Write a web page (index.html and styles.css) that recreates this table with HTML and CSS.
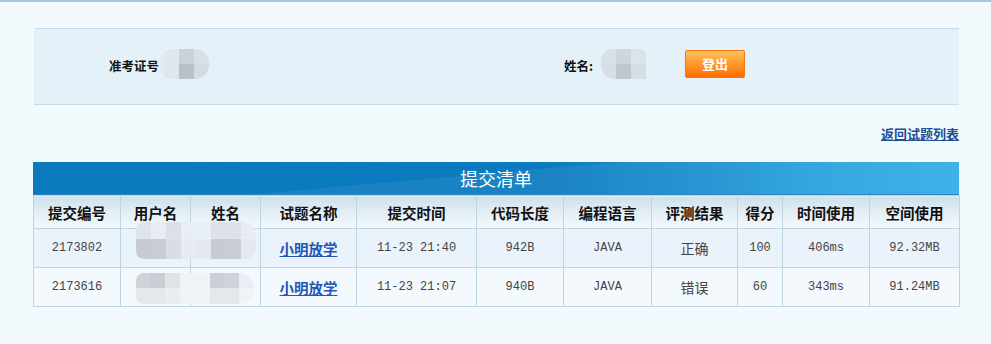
FILE: index.html
```html
<!DOCTYPE html>
<html lang="zh-CN">
<head>
<meta charset="utf-8">
<title>提交清单</title>
<link rel="stylesheet" href="styles.css">
</head>
<body>
<div class="page">
  <div class="user-panel">
    <div class="field field-id">
      <span class="label">准考证号</span>
      <span class="blur blur-id"></span>
    </div>
    <div class="field field-name">
      <span class="label">姓名:</span>
      <span class="blur blur-name"></span>
    </div>
    <button class="logout">登出</button>
  </div>

  <div class="back-row">
    <a class="back-link" href="#">返回试题列表</a>
  </div>

  <div class="list">
    <div class="list-title">提交清单</div>
    <div class="table-wrap">
      <table class="subs">
        <colgroup>
          <col class="c1"><col class="c2"><col class="c3"><col class="c4"><col class="c5"><col class="c6"><col class="c7"><col class="c8"><col class="c9"><col class="c10"><col class="c11">
        </colgroup>
        <thead>
          <tr>
            <th>提交编号</th><th>用户名</th><th>姓名</th><th>试题名称</th><th>提交时间</th><th>代码长度</th><th>编程语言</th><th>评测结果</th><th>得分</th><th>时间使用</th><th>空间使用</th>
          </tr>
        </thead>
        <tbody>
          <tr class="odd">
            <td class="mono">2173802</td><td></td><td></td><td><a class="prob" href="#">小明放学</a></td><td class="mono">11-23 21:40</td><td class="mono">942B</td><td class="mono">JAVA</td><td class="cjk">正确</td><td class="mono">100</td><td class="mono">406ms</td><td class="mono">92.32MB</td>
          </tr>
          <tr class="even">
            <td class="mono">2173616</td><td></td><td></td><td><a class="prob" href="#">小明放学</a></td><td class="mono">11-23 21:07</td><td class="mono">940B</td><td class="mono">JAVA</td><td class="cjk">错误</td><td class="mono">60</td><td class="mono">343ms</td><td class="mono">91.24MB</td>
          </tr>
        </tbody>
      </table>
      <span class="blur blur-row1"></span>
      <span class="blur blur-row2"></span>
    </div>
  </div>
</div>
</body>
</html>
```

FILE: styles.css
```css
html, body {
  margin: 0;
  padding: 0;
}
body {
  background: #f3fafe;
  font-family: "Noto Sans CJK SC", "DejaVu Sans", sans-serif;
  color: #111;
  border-top: 2px solid #a9c5d9;
  height: 342px;
  overflow: hidden;
}
.page {
  margin-left: 33px;
  width: 926px;
  padding-top: 26px;
}

/* user panel */
.user-panel {
  margin-left: 1px;
  height: 75px;
  background: #e5f1f9;
  border-top: 1px solid #c3dcea;
  border-bottom: 1px solid #c3dcea;
  display: flex;
  align-items: center;
  padding-left: 75px;
}
.field {
  display: flex;
  align-items: center;
}
.label {
  font-size: 12.5px;
  font-weight: bold;
  color: #111;
}
.field-id .label { margin-top: -3px; }
.field-name { margin-left: 355px; }
.field-name .label { margin-top: -3px; }
.blur {
  display: inline-block;
}
.blur-id {
  width: 50px;
  height: 30px;
  margin-top: -6px;
  border-radius: 14px;
  background:
    linear-gradient(to right, #e3eaf0 0 10%, #e0e7ee 10% 40%, #c9d2d9 40% 70%, #d8e0e7 70% 100%) top / 100% 50% no-repeat,
    linear-gradient(to right, #e3eaf0 0 10%, #dfe6ed 10% 40%, #b9c1c7 40% 70%, #d3dbe2 70% 100%) bottom / 100% 50% no-repeat;
}
.blur-name {
  width: 45px;
  height: 30px;
  margin-top: -6px;
  margin-left: 8px;
  border-radius: 12px 6px 0 14px;
  background:
    linear-gradient(to right, #d8e1e8 0 33.3%, #cdd6dd 33.3% 66.6%, #dce4eb 66.6% 100%) top / 100% 50% no-repeat,
    linear-gradient(to right, #d6dfe6 0 33.3%, #bfc7cd 33.3% 66.6%, #d7dfe6 66.6% 100%) bottom / 100% 50% no-repeat;
}
.logout {
  margin-left: 39px;
  margin-top: -6px;
  width: 60px;
  height: 28px;
  border: 1px solid #f07a10;
  border-radius: 2px;
  background: linear-gradient(to bottom, #ffc25e 0%, #ff9a2e 45%, #ff6f00 100%);
  color: #fff;
  font-family: "Noto Sans CJK SC", sans-serif;
  font-weight: bold;
  font-size: 13px;
  padding: 0;
  line-height: 24px;
}

/* back link */
.back-row {
  display: flex;
  justify-content: flex-end;
  padding-top: 20px;
  height: 37px;
  box-sizing: border-box;
}
.back-link {
  font-size: 13px;
  font-weight: bold;
  color: #214f92;
  text-decoration: underline;
  line-height: 17px;
}

/* list */
.list {
  margin-top: 20px;
}
.list-title {
  height: 33px;
  line-height: 33px;
  text-align: center;
  color: #fff;
  font-size: 18px;
  background:
    linear-gradient(175deg, rgba(255,255,255,0) 0 45%, rgba(255,255,255,0.06) 46% 100%),
    linear-gradient(to right, #0a79bd 0%, #0b7bbf 55%, #1a8fcf 72%, #2aa3de 86%, #33ade7 100%);
  border-bottom: 1px solid #2b86c0;
  box-sizing: border-box;
}
.table-wrap {
  position: relative;
}
.subs {
  width: 926px;
  table-layout: fixed;
  border-collapse: collapse;
}
.c1 { width: 87px; }
.c2 { width: 70px; }
.c3 { width: 70px; }
.c4 { width: 96px; }
.c5 { width: 120px; }
.c6 { width: 87px; }
.c7 { width: 88px; }
.c8 { width: 86px; }
.c9 { width: 45px; }
.c10 { width: 87px; }
.c11 { width: 90px; }
.subs th, .subs td {
  border: 1px solid #bcd5df;
  text-align: center;
  padding: 0;
}
.subs th {
  height: 32px;
  font-size: 14.5px;
  font-weight: bold;
  color: #111;
  background: linear-gradient(to bottom, #cde0eb 0%, #e3eef5 50%, #f3f9fc 100%);
}
.subs td {
  height: 38px;
  color: #444;
}
.subs tr.odd td { background: #eaf3fc; }
.subs tr.even td { background: #f3f9fd; }
.mono {
  font-family: "Liberation Mono", "DejaVu Sans Mono", monospace;
  font-size: 12px;
}
.cjk {
  font-size: 14px;
  color: #333;
}
.prob {
  font-size: 14.5px;
  font-weight: bold;
  color: #2357b6;
  text-decoration: underline;
}

/* redaction overlays */
.blur-row1 {
  position: absolute;
  left: 103px;
  top: 27px;
  width: 120px;
  height: 37px;
  border-radius: 8px 14px 10px 8px;
  background:
    linear-gradient(to right, #dfe3ea 0 12.5%, #e8edf3 12.5% 25%, #dcdfe5 25% 37.5%, #e8eef5 37.5% 50%, #e9eff6 50% 62.5%, #dde2e9 62.5% 75%, #dde2e9 75% 87.5%, #e8edf4 87.5% 100%) top / 100% 45% no-repeat,
    linear-gradient(to right, #c8ccd2 0 12.5%, #c9cdd3 12.5% 25%, #dadde3 25% 37.5%, #e6ebf2 37.5% 50%, #e4e9f0 50% 62.5%, #c7cbd1 62.5% 75%, #c9cdd3 75% 87.5%, #e4e9f0 87.5% 100%) bottom / 100% 55% no-repeat;
}
.blur-row2 {
  position: absolute;
  left: 103px;
  top: 78px;
  width: 118px;
  height: 31px;
  border-radius: 8px 16px 16px 8px;
  background:
    linear-gradient(to right, #cfd2d8 0 12.5%, #cacdd3 12.5% 25%, #e0e3e8 25% 37.5%, #eef3f8 37.5% 50%, #eef3f8 50% 62.5%, #cbced4 62.5% 75%, #cfd2d8 75% 87.5%, #e9eef4 87.5% 100%) top / 100% 50% no-repeat,
    linear-gradient(to right, #e4e7ec 0 12.5%, #e4e7ec 12.5% 25%, #e9ecf0 25% 37.5%, #eef3f8 37.5% 50%, #eef3f8 50% 62.5%, #e4e7ec 62.5% 75%, #e4e7ec 75% 87.5%, #eef3f8 87.5% 100%) bottom / 100% 50% no-repeat;
}
```
